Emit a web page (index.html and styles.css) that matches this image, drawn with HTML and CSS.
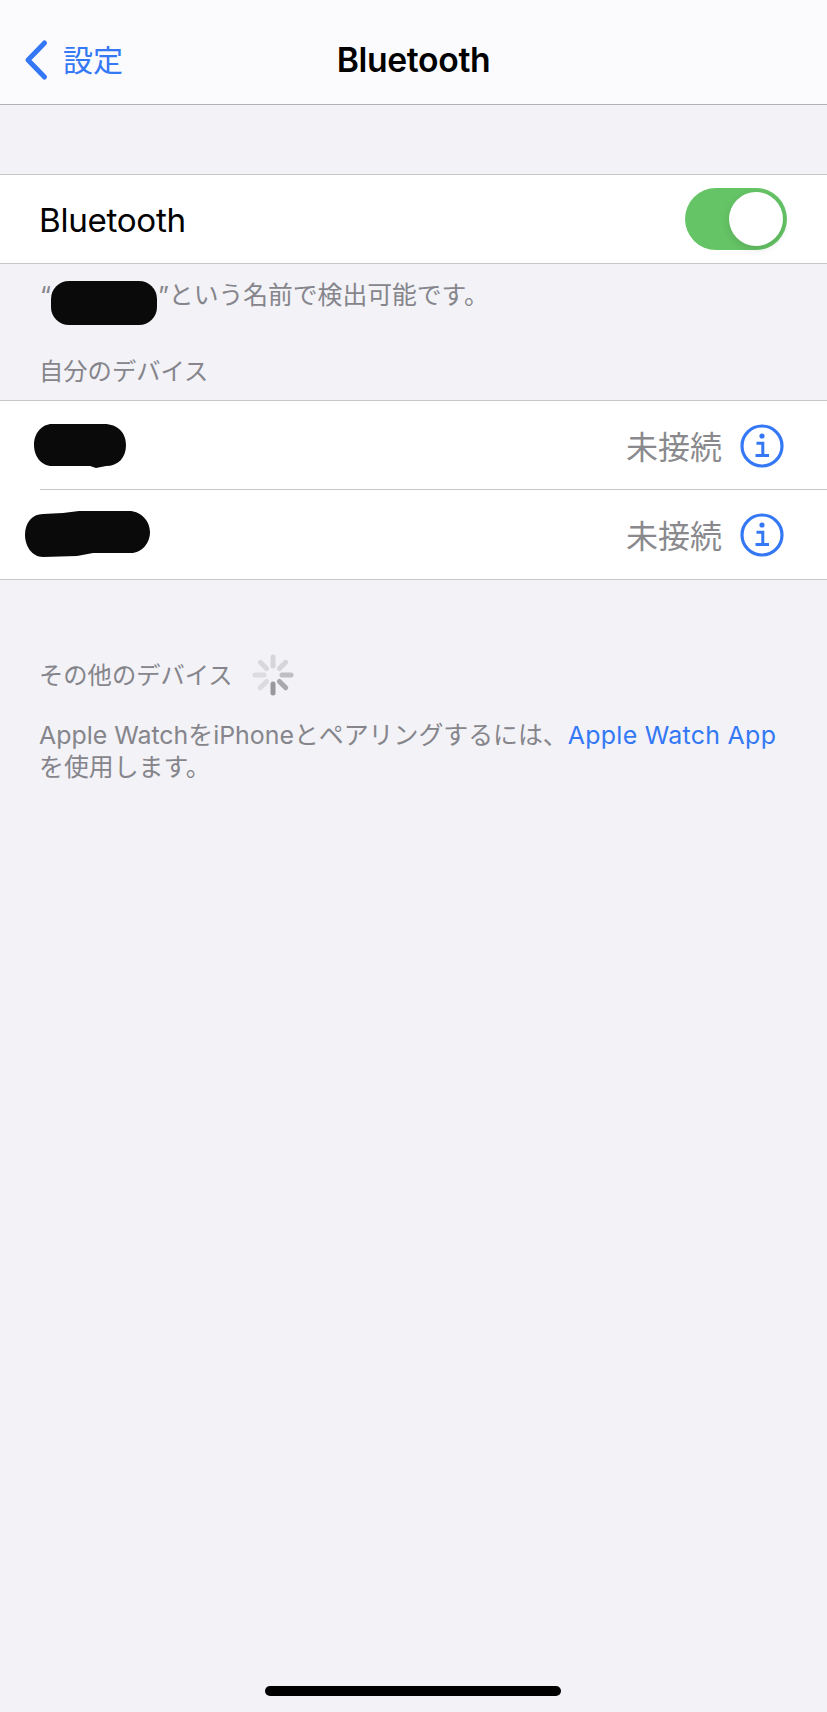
FILE: index.html
```html
<!DOCTYPE html>
<html lang="ja">
<head>
<meta charset="utf-8">
<title>Bluetooth</title>
<link rel="stylesheet" href="styles.css">
</head>
<body>
<div class="screen">
  <header class="nav">
    <a class="back">
      <svg class="chevron" viewBox="0 0 26 42" aria-hidden="true"><path d="M21.5 4 L5 21 L21.5 38"/></svg>
      <span class="back-label">設定</span>
    </a>
    <h1 class="title">Bluetooth</h1>
    <span class="nav-side"></span>
  </header>

  <section class="group first-group">
    <div class="row">
      <span class="row-label">Bluetooth</span>
      <span class="switch"><span class="knob"></span></span>
    </div>
  </section>
  <p class="footnote">“<svg class="blob blob-name" viewBox="0 0 106 44" aria-hidden="true"><rect width="106" height="44" rx="18"/></svg>”という名前で検出可能です。</p>

  <h2 class="section-title">自分のデバイス</h2>
  <section class="group">
    <div class="row device">
      <svg class="blob blob-a" viewBox="0 0 92 45" aria-hidden="true"><path d="M18 1 H70 C84 1 92 10 92 22 C92 35 84 43 72 43 L62 45 L56 43 H18 C7 43 0 33 0 22 C0 10 8 1 18 1Z"/></svg>
      <span class="status">未接続</span>
      <svg class="info" viewBox="0 0 44 44" aria-hidden="true">
        <circle class="info-ring" cx="22" cy="22" r="20"/>
        <circle class="info-dot" cx="22" cy="12" r="2.6"/>
        <path class="info-stem" d="M16.5 19.2 H22.8 V31.5 M15.5 31.5 H29"/>
      </svg>
    </div>
    <div class="row device">
      <svg class="blob blob-b" viewBox="0 0 125 46" aria-hidden="true"><path d="M18 3 L38 2 L54 0 H104 C116 0 125 10 125 21 C125 32 117 42 106 42 L68 42 L52 45 L18 46 C7 46 0 35 0 24 C0 12 7 3 18 3Z"/></svg>
      <span class="status">未接続</span>
      <svg class="info" viewBox="0 0 44 44" aria-hidden="true">
        <circle class="info-ring" cx="22" cy="22" r="20"/>
        <circle class="info-dot" cx="22" cy="12" r="2.6"/>
        <path class="info-stem" d="M16.5 19.2 H22.8 V31.5 M15.5 31.5 H29"/>
      </svg>
    </div>
  </section>

  <div class="section-title other-title">
    <span>その他のデバイス</span>
    <svg class="spinner" viewBox="0 0 42 42" aria-hidden="true">
      <line class="s1" x1="21" y1="12" x2="21" y2="3"/>
      <line class="s2" x1="27.4" y1="14.6" x2="33.7" y2="8.3"/>
      <line class="s3" x1="30" y1="21" x2="39" y2="21"/>
      <line class="s4" x1="27.4" y1="27.4" x2="33.7" y2="33.7"/>
      <line class="s5" x1="21" y1="30" x2="21" y2="39"/>
      <line class="s6" x1="14.6" y1="27.4" x2="8.3" y2="33.7"/>
      <line class="s7" x1="12" y1="21" x2="3" y2="21"/>
      <line class="s8" x1="14.6" y1="14.6" x2="8.3" y2="8.3"/>
    </svg>
  </div>
  <p class="note">Apple WatchをiPhoneとペアリングするには、<a class="link">Apple Watch App</a><br>を使用します。</p>

  <div class="home-indicator"></div>
</div>
</body>
</html>
```
FILE: styles.css
```css
* { box-sizing: border-box; }
html, body { margin: 0; padding: 0; }
body {
  background: #f2f2f7;
  font-family: Inter, "Noto Sans CJK JP", "Liberation Sans", sans-serif;
  color: #000;
}
.screen {
  position: relative;
  height: 1712px;
  overflow: hidden;
}
.nav {
  display: grid;
  grid-template-columns: 1fr auto 1fr;
  align-items: center;
  height: 105px;
  padding: 16px 0 0;
  background: #fbfbfd;
  border-bottom: 1px solid #b1b1b5;
}
.back {
  display: flex;
  align-items: center;
  gap: 14px;
  padding-left: 23px;
  color: #3478f6;
}
.chevron { width: 26px; height: 42px; }
.chevron path {
  fill: none;
  stroke: #3478f6;
  stroke-width: 5;
  stroke-linecap: round;
  stroke-linejoin: round;
}
.back-label { font-size: 30px; line-height: 40px; }
.title {
  margin: 0;
  font-size: 33.7px;
  font-weight: 600;
  line-height: 40px;
  letter-spacing: -0.35px;
}
.group {
  background: #fff;
  border-top: 1px solid #c6c6c8;
  border-bottom: 1px solid #c6c6c8;
}
.first-group { margin-top: 69px; }
.row {
  display: flex;
  align-items: center;
  height: 88px;
  padding: 0 40px 0 39px;
}
.row-label { flex: 1; padding-top: 2px; font-size: 33.2px; letter-spacing: -0.3px; }
.switch {
  display: flex;
  justify-content: flex-end;
  width: 102px;
  height: 62px;
  padding: 4px;
  border-radius: 31px;
  background: #65c466;
}
.knob {
  display: block;
  width: 54px;
  height: 54px;
  border-radius: 50%;
  background: #fff;
  box-shadow: 0 3px 8px rgba(0, 0, 0, 0.12);
}
.footnote {
  display: flex;
  align-items: center;
  height: 44px;
  margin: 9px 0 0;
  padding-left: 40px;
  font-size: 24.8px;
  line-height: 32px;
  color: #85858b;
}
.blob { display: block; fill: #0a0a0a; flex: none; }
.blob-name { width: 106px; height: 44px; margin: 16px 1px 0 0; }
.section-title {
  margin: 0;
  padding: 38px 40px 0 39px;
  height: 83px;
  font-size: 24.3px;
  font-weight: 400;
  line-height: 32px;
  color: #85858b;
}
.device { position: relative; height: 88px; padding-right: 43px; }
.device + .device { height: 90px; }
.device + .device::before {
  content: "";
  position: absolute;
  top: 0;
  left: 40px;
  right: 0;
  border-top: 1px solid #c6c6c8;
}
.blob-a { width: 92px; height: 45px; margin-left: -5px; }
.blob-b { width: 125px; height: 46px; margin-left: -14px; margin-top: -1px; }
.status {
  margin-left: auto;
  padding-top: 5px;
  font-size: 32px;
  line-height: 40px;
  color: #8a8a8e;
}
.info { width: 44px; height: 44px; margin-top: 2px; margin-left: 18px; flex: none; }
.info-ring { fill: none; stroke: #3478f6; stroke-width: 3.2; }
.info-dot { fill: #3478f6; }
.info-stem { fill: none; stroke: #3478f6; stroke-width: 3; }
.other-title {
  display: flex;
  align-items: center;
  gap: 19px;
  height: auto;
  margin-top: 74px;
  padding: 0 40px 0 39px;
}
.spinner { width: 42px; height: 42px; flex: none; }
.spinner line { stroke-width: 5; stroke-linecap: round; }
.s1 { stroke: #d6d6da; }
.s2 { stroke: #d6d6da; }
.s3 { stroke: #bfbfc3; }
.s4 { stroke: #a9a9ad; }
.s5 { stroke: #98989d; }
.s6 { stroke: #dcdce0; }
.s7 { stroke: #dcdce0; }
.s8 { stroke: #d9d9dd; }
.note {
  margin: 23px 0 0;
  padding: 0 40px 0 39px;
  font-size: 24.9px;
  line-height: 32px;
  color: #85858b;
}
.link { color: #3478f6; letter-spacing: 0.3px; }
.home-indicator {
  position: absolute;
  left: 265px;
  bottom: 16px;
  width: 296px;
  height: 10px;
  border-radius: 5px;
  background: #000;
}
```
